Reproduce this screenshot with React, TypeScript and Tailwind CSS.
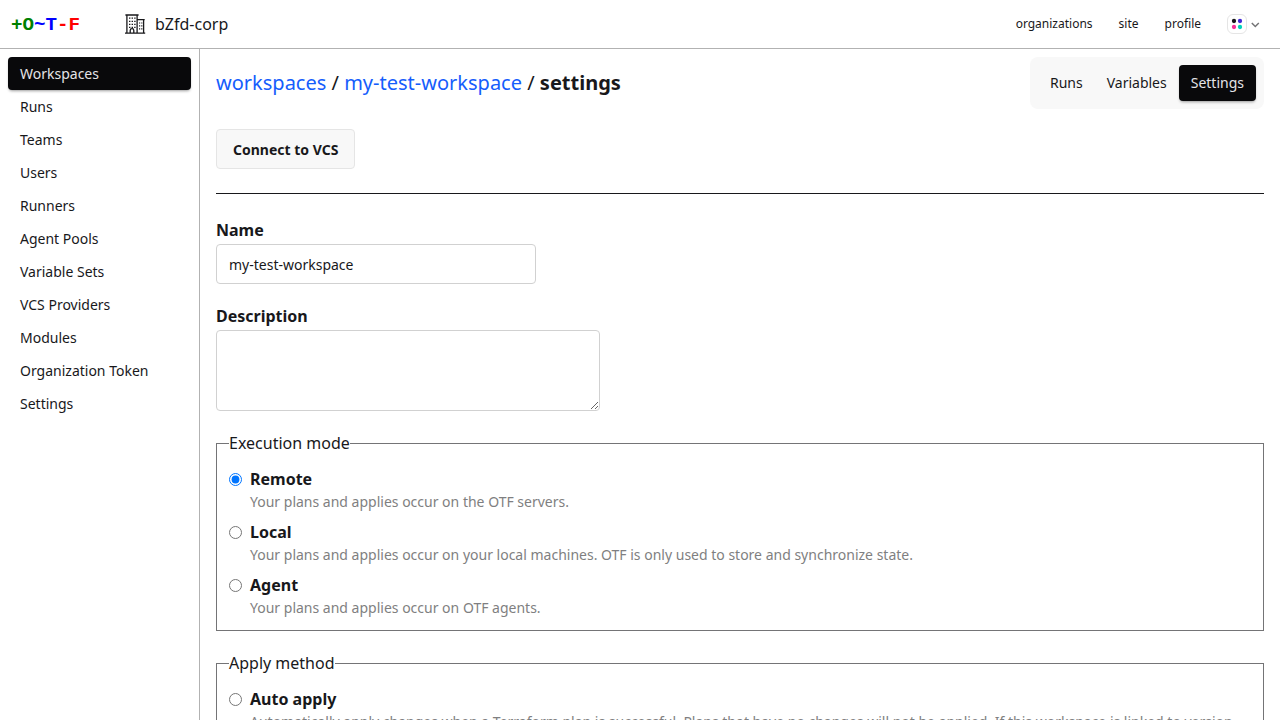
import React from "react";

const menu = ["Workspaces", "Runs", "Teams", "Users", "Runners", "Agent Pools", "Variable Sets", "VCS Providers", "Modules", "Organization Token", "Settings"];

type Option = { title: string; text: string; checked?: boolean };

const executionModes: Option[] = [
  { title: "Remote", text: "Your plans and applies occur on the OTF servers.", checked: true },
  { title: "Local", text: "Your plans and applies occur on your local machines. OTF is only used to store and synchronize state." },
  { title: "Agent", text: "Your plans and applies occur on OTF agents." },
];

const applyMethods: Option[] = [
  { title: "Auto apply", text: "Automatically apply changes when a Terraform plan is successful. Plans that have no changes will not be applied. If this workspace is linked to version control, a push to the default branch of the linked repository will trigger a plan and apply." },
];

function BuildingIcon() {
  return (
    <svg width="21" height="20" viewBox="0 0 21 20" fill="none" stroke="#18181b" strokeWidth="1.3">
      <path d="M0 19.2h20.2M1.9 19V1M12.1 19V1M18.6 19V5.6M.4 1h13.2M12.1 5.6h7.6" />
      <path d="M5.2 19v-2.6a1.8 1.8 0 0 1 3.6 0V19" />
      <path d="M4 4.2h6.8M4 7.3h6.8M4 10.4h6.8M4 13.3h6.8" strokeWidth="1.2" strokeDasharray="1.4 1.2" />
      <path d="M14 9h3.4M14 11.9h3.4M14 14.8h3.4" strokeWidth="1.2" strokeDasharray="1.2 1" />
    </svg>
  );
}

function RadioGroup({ legend, name, options }: { legend: string; name: string; options: Option[] }) {
  return (
    <fieldset className="flex flex-col gap-2 border border-[#747476] px-3 py-3">
      <legend className="leading-6">{legend}</legend>
      {options.map((o) => (
        <label key={o.title} className="grid grid-cols-[13px_1fr] gap-x-2">
          <input type="radio" name={name} defaultChecked={o.checked} className="m-0 h-[13px] w-[13px] self-center" />
          <span className="font-bold leading-6">{o.title}</span>
          <span className="col-start-2 text-sm leading-[21px] text-[#7f7f81]">{o.text}</span>
        </label>
      ))}
    </fieldset>
  );
}

export default function App() {
  return (
    <div className="flex h-screen flex-col overflow-hidden bg-white font-['Noto_Sans',sans-serif] text-base text-[#18181b]">
      <header className="flex h-[49px] shrink-0 items-center border-b border-[#b2b2b2] pr-5 pl-[11px]">
        <div className="w-[114px] pt-0.5 font-['Liberation_Mono',monospace] text-[19.2px] font-bold">
          <span className="text-[#008000]">+O</span>
          <span className="text-[#0000ff]">~T</span>
          <span className="text-[#ff0000]">-F</span>
        </div>
        <BuildingIcon />
        <span className="ml-[9px]">bZfd-corp</span>
        <nav className="ml-auto flex items-center gap-[26px] text-xs">
          <a>organizations</a>
          <a>site</a>
          <a>profile</a>
          <div className="flex items-center gap-1">
            <div className="flex h-5 w-5 items-center justify-center rounded-md border border-[#e5e5e5]">
              <svg width="12" height="12" viewBox="0 0 12 12">
                <circle cx="3" cy="3" r="2.15" fill="#18181b" />
                <circle cx="9" cy="3" r="2.15" fill="#422ad5" />
                <circle cx="3" cy="9" r="2.15" fill="#f43098" />
                <circle cx="9" cy="9" r="2.15" fill="#00d3bb" />
              </svg>
            </div>
            <svg width="9" height="9" viewBox="0 0 9 9" fill="none" stroke="#747476" strokeWidth="1.5">
              <path d="M.8 3l3.5 3.5L7.8 3" />
            </svg>
          </div>
        </nav>
      </header>
      <div className="flex min-h-0 flex-1">
        <aside className="w-[200px] shrink-0 border-r border-[#b2b2b2] p-2">
          <ul className="text-sm leading-[21px]">
            {menu.map((m, i) => (
              <li key={m} className={i === 0 ? "rounded-sm bg-[#09090b] px-3 py-1.5 text-[#e4e4e7] shadow-[0_2px_3px_-1px_rgba(9,9,11,0.4)]" : "px-3 py-1.5"}>
                {m}
              </li>
            ))}
          </ul>
        </aside>
        <main className="flex min-w-0 flex-1 flex-col overflow-hidden px-4 pt-2">
          <div className="flex shrink-0 items-center justify-between">
            <h1 className="text-xl">
              <a className="text-[#155dfc]">workspaces</a> / <a className="text-[#155dfc]">my-test-workspace</a> / <b>settings</b>
            </h1>
            <div className="flex rounded-lg bg-[#f8f8f8] p-2 text-sm leading-9">
              <a className="px-3">Runs</a>
              <a className="px-3">Variables</a>
              <a className="rounded-sm bg-[#09090b] px-3 text-[#e4e4e7] shadow-[0_2px_3px_-1px_rgba(9,9,11,0.4)]">Settings</a>
            </div>
          </div>
          <button className="mt-5 h-10 shrink-0 self-start rounded-sm border border-[#e5e5e5] bg-[#f8f8f8] px-4 pt-px text-sm font-bold">Connect to VCS</button>
          <hr className="mt-6 border-[#18181b]" />
          <form className="mt-6 flex shrink-0 flex-col gap-5">
            <div className="flex flex-col gap-0.5">
              <label className="font-bold leading-6">Name</label>
              <input className="h-10 w-80 rounded-sm border border-[#d1d1d1] px-3 text-sm" defaultValue="my-test-workspace" />
            </div>
            <div className="flex flex-col gap-0.5">
              <label className="font-bold leading-6">Description</label>
              <textarea className="h-[81px] w-96 rounded-sm border border-[#d1d1d1] px-3 py-2 text-sm" />
            </div>
            <RadioGroup legend="Execution mode" name="execution" options={executionModes} />
            <RadioGroup legend="Apply method" name="apply" options={applyMethods} />
          </form>
        </main>
      </div>
    </div>
  );
}
